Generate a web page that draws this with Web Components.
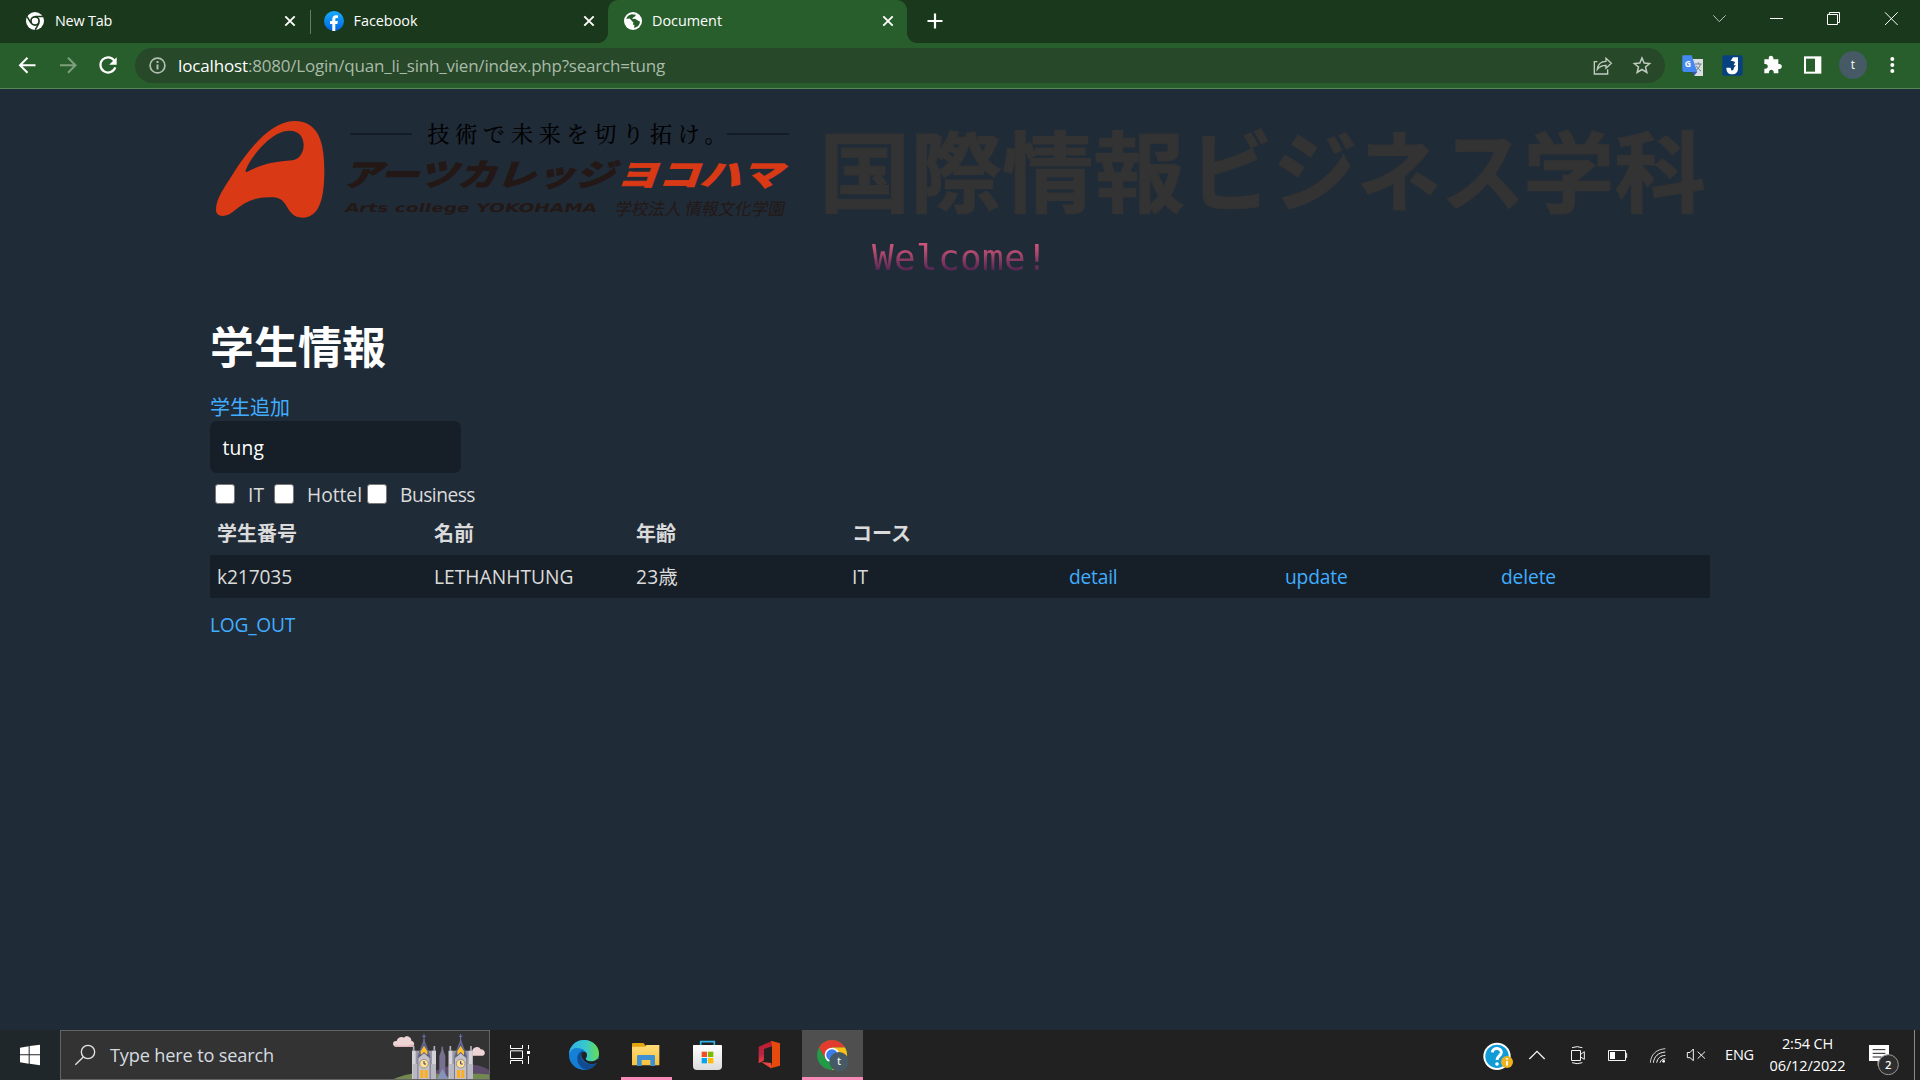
<!DOCTYPE html>
<html lang="ja">
<head>
<meta charset="utf-8">
<title>Document</title>
<style>
html,body{margin:0;height:100%;background:#202b38;overflow:hidden}
</style>
</head>
<body>
<desktop-screen></desktop-screen>
<script>
const UI = '"Open Sans","Noto Sans CJK JP",sans-serif';
const JP = '"Noto Sans CJK JP",sans-serif';

// Segment of a bar: x, y, w, h are drawing units, k is units per CSS pixel.
const seg = (x, y, w, h, k, body) =>
  `<svg width="${w / k}" height="${h / k}" viewBox="${x} ${y} ${w} ${h}" fill="none" style="display:block;flex:none">${body}</svg>`;

function define(name, css, html) {
  const t = document.createElement('template');
  t.innerHTML = `<style>:host{display:block;box-sizing:border-box}${css}</style>${html}`;
  customElements.define(name, class extends HTMLElement {
    constructor() {
      super();
      this.attachShadow({ mode: 'open' }).appendChild(t.content.cloneNode(true));
    }
  });
}

// Text that is tracked to occupy an exact width.
customElements.define('fit-text', class extends HTMLElement {
  constructor() {
    super();
    this.attachShadow({ mode: 'open' }).innerHTML =
      '<style>:host{display:inline-block;white-space:pre;flex:none}span{display:inline-block}</style><span><slot></slot></span>';
  }
  connectedCallback() {
    const target = +this.getAttribute('w');
    const n = this.textContent.length;
    const now = this.shadowRoot.querySelector('span').getBoundingClientRect().width;
    if (target && now) this.style.letterSpacing = ((target - now) / n).toFixed(3) + 'px';
    if (target) this.style.width = target + 'px';
  }
});

/* ---------- browser chrome ---------- */
const close = '<svg width="12" height="12" viewBox="0 0 12 12" style="display:block"><path d="M1.3 1.3L10.7 10.7M10.7 1.3L1.3 10.7" stroke="#fff" stroke-width="1.9"/></svg>';

define('browser-tab', `
:host{display:flex;align-items:center;height:43px;width:298px;padding:0 14px 1px 25px;color:#fff;font:14.4px ${UI};flex:none}
:host([active]){background:#285e2b;border-radius:10px 10px 0 0;position:relative;width:299px;padding-left:15px;padding-right:13px}
:host([active])::before,:host([active])::after{content:"";position:absolute;bottom:0;width:10px;height:10px}
:host([active])::before{left:-10px;background:radial-gradient(circle at 0 0,transparent 9.6px,#285e2b 10.2px)}
:host([active])::after{right:-10px;background:radial-gradient(circle at 100% 0,transparent 9.6px,#285e2b 10.2px)}
.t{margin:-2px 0 0 9px;flex:1;display:flex}`,
`<slot name="icon"></slot><div class="t"><slot></slot></div>${close}`);

define('tab-strip', `
:host{display:flex;height:43px;background:#1a381b;color:#fff}
.div{width:1px;height:24px;background:#60805f;margin-top:10px;flex:none}
.sp{flex:1}
svg{display:block}
.a{padding-left:25px}.b{width:297px;padding-left:13px;padding-right:13px}`,
`<browser-tab class="a" style="width:310px"><svg slot="icon" width="20" height="20" viewBox="0 0 20 20"><circle cx="10" cy="10" r="9" fill="#fff"/><circle cx="10" cy="10" r="4.9" fill="#1a381b"/><circle cx="10" cy="10" r="3.2" fill="#fff"/><path d="M10 5.5H18M6 12.2L2.1 5.6M14 12.2L10.2 18.8" stroke="#1a381b" stroke-width="1.5"/></svg><fit-text w="57" style="margin-left:1px">New Tab</fit-text></browser-tab>
<span class="div"></span>
<browser-tab class="b"><svg slot="icon" width="20" height="20" viewBox="0 0 20 20"><defs><linearGradient id="f" x2="0" y2="1"><stop stop-color="#18acfe"/><stop offset="1" stop-color="#0163e0"/></linearGradient></defs><circle cx="10" cy="10" r="10" fill="url(#f)"/><path d="M8.3 20V13H6V10H8.3V8.2C8.3 5.5 9.8 4.3 12 4.3L14 4.5V7H12.6C11.6 7 11.3 7.5 11.3 8.3V10H13.9L13.4 13H11.3V20Z" fill="#fff"/></svg><fit-text w="64" style="margin-left:.5px">Facebook</fit-text></browser-tab>
<browser-tab active><svg slot="icon" width="20" height="20" viewBox="0 0 20 20"><circle cx="10" cy="10" r="9" fill="#fff"/><path d="M9 3.2C5.6 3.8 3.2 6.2 3 9.2L6 10.5 10.3 11 10 13.5 11.5 14 11 16.8C14.7 16.2 16.9 13.5 16.9 10.4L14.3 9.2 12.2 7.8 9.2 7.9 10.3 6.2 12.3 5.3 12.7 3.7Z" fill="#285e2b"/><path d="M2 8L6.8 7.6 9.6 10.8 8.2 13.2 9.5 17.8 5 16.5 2 12Z" fill="#fff"/></svg><fit-text w="70">Document</fit-text></browser-tab>
${seg(907, 0, 50, 43, 1, '<path d="M935 13.5V28.5M927.5 21H942.5" stroke="#fff" stroke-width="2.2"/>')}
<span class="sp"></span>
${seg(420, 0, 660, 129, 3, '<g stroke="#fff" stroke-width="3"><path d="M460 46L478 65 497 46" stroke-width="2.4" stroke="#dfe6df"/><path d="M630 55.5H669"/><path d="M802.5 43.500H832.5V73.500H802.500ZM808 43V37.5H838.5V67.5H833"/><path d="M975 37L1013 75M1013 37L975 75"/></g>')}`);

define('tool-bar', `
:host{display:flex;align-items:center;height:46px;background:#285e2b;border-bottom:1px solid #568758}
.omni{display:flex;align-items:center;width:1530px;height:35px;border-radius:18px;background:#28482a;font:17px ${UI};color:#a9bba9;overflow:hidden;flex:none}
.omni b{font-weight:400;color:#fff;display:block;padding-left:1px}
.sp{flex:1}`,
`${seg(0, 43, 135, 45, 1, '<g stroke-width="2" transform="translate(0 .3)"><path d="M35.500 65H20.500M27.500 57.500L20 65 27.500 72.500" stroke="#fff"/><path d="M60 65H75M68 57.500L75.500 65 68 72.500" stroke="#7d9f7e"/><path d="M114.500 60.500A7.600 7.600 0 1 0 115.300 67" stroke="#fff" stroke-width="2.200"/><path d="M116.700 57V64.500H109.200Z" fill="#fff"/></g>')}
<div class="omni">${seg(135, 48, 42, 35, 1, '<circle cx="157.500" cy="65.500" r="7.400" stroke="#b3bfb3" stroke-width="1.700"/><path d="M157.500 64.500V69.500M157.500 61V63" stroke="#b3bfb3" stroke-width="2"/>')}<b><fit-text w="70">localhost</fit-text></b><fit-text w="417">:8080/Login/quan_li_sinh_vien/index.php?search=tung</fit-text><span class="sp"></span>
${seg(85, 144, 230, 105, 3, '<g stroke="#c2cdc2" stroke-width="4"><path d="M113 185H104V222H144V208M113 208C115 192 124 184 139 184V175L155 190 139 205V196C128 196 119 200 113 208Z"/><path d="M247 174L253.500 189 270 190.500 257.500 201 261.500 217.500 247 208.500 232.500 217.500 236.500 201 224 190.500 240.500 189Z" stroke-width="4.500"/></g>')}</div>
${seg(315, 129, 765, 135, 3, `
<path d="M397 177H429V228H404Z" fill="#dcdfe1"/><path d="M368 166H395L412 216H373Q367 216 367 210V170Q367 166 368 166Z" fill="#4688f1"/><path d="M397 216H412L404 225Z" fill="#3a53c5"/><path d="M405 192H425M415 187V192M421 193C418 203 412 209 406 213M409 198C413 205 418 210 423 213" stroke="#667b88" stroke-width="3"/><text x="374" y="200" font-family="Open Sans" font-weight="700" font-size="26" fill="#fff">G</text>
<rect x="487" y="166" width="61" height="61" rx="6" fill="#07417f"/><path d="M519 172H534V205C534 218 527 223 517 223 505 223 499 216 499 203H512C512 208 514 211 517 211 520 211 521 209 521 204V183H512Z" fill="#fff"/><path d="M522 185L510 199H518L514 212 528 196H520L526 186Z" fill="#07417f"/>
<path d="M613 178H627C622 164 643 164 640 178H655V192C668 189 670 208 655 207V220H641C644 206 624 206 627 220H613V206C627 209 627 189 613 192Z" fill="#fff"/>
<path d="M732 169H784V221H732Z" fill="#fff"/><path d="M738 176H765V215H738Z" fill="#285e2b"/>
<circle cx="879" cy="195" r="42" fill="#455a64"/><text x="879" y="207" text-anchor="middle" font-family="Open Sans" font-size="36" fill="#fff">t</text>
<g fill="#fff"><circle cx="997" cy="177" r="6"/><circle cx="997" cy="195" r="6"/><circle cx="997" cy="213" r="6"/></g>`)}`);

/* ---------- web page ---------- */
define('school-banner', `svg{display:block}`,
`<svg width="1500" height="140" viewBox="210 89 1500 140">
<path transform="translate(205 115) scale(.33333)" fill="#d93a15" fill-rule="evenodd" d="M33 285C33 250 58 219 87 172C128 108 196 18 268 18C343 18 358 87 358 165C358 247 345 308 292 308C242 308 253 250 207 247C154 243 120 260 87 288C65 308 33 308 33 285ZM122 166C136 128 198 47 253 47C285 47 296 69 296 90C296 115 281 134 262 136C211 139 164 149 126 171Q121 172 122 166Z"/>
<path d="M350 134H412M727 134H789" stroke="#111822" stroke-width="1.500"/>
<text x="427.500" y="142" font-family='"Noto Serif CJK JP","Noto Sans CJK JP",serif' font-size="22" letter-spacing="5.800" fill="#000" stroke="#000" stroke-width=".2">技術で未来を切り拓け。</text>
<g font-family='${JP}' font-weight="900" font-size="31" stroke-width=".6">
<text transform="translate(342 186) skewX(-20)" textLength="272" lengthAdjust="spacingAndGlyphs" fill="#231815" stroke="#231815">アーツカレッジ</text>
<text transform="translate(616 186) skewX(-20)" textLength="166" lengthAdjust="spacingAndGlyphs" fill="#d93a15" stroke="#d93a15">ヨコハマ</text></g>
<text transform="translate(344 212) skewX(-14)" textLength="252" lengthAdjust="spacingAndGlyphs" font-family='"DejaVu Sans",sans-serif' font-weight="700" font-size="12" fill="#231815">Arts college YOKOHAMA</text>
<text transform="translate(614 214.500) skewX(-12)" textLength="170" lengthAdjust="spacingAndGlyphs" font-family='${JP}' font-size="17" fill="#231815">学校法人 情報文化学園</text>
<g font-family='${JP}' font-weight="700" font-size="88" fill="#333" stroke="#333" stroke-width="1">
<text x="819" y="204.500" textLength="366" lengthAdjust="spacingAndGlyphs">国際情報</text>
<text x="1189" y="204" textLength="336" lengthAdjust="spacingAndGlyphs">ビジネス</text>
<text x="1523" y="204.500" textLength="183" lengthAdjust="spacingAndGlyphs">学科</text></g>
</svg>`);

define('welcome-line', `
:host{display:flex;justify-content:center;margin-top:7px;height:47px}
fit-text{font:36px/44px "DejaVu Sans Mono",monospace;color:transparent;background:linear-gradient(#d0567a 7px,#b34a6f 16px,#4a2350 36px,#3c2048);-webkit-background-clip:text;background-clip:text}`,
`<fit-text w="176">Welcome!</fit-text>`);

define('check-option', `
:host{display:flex;align-items:center;height:30px}
i{width:20px;height:20px;border:1px solid #767676;border-radius:3px;background:#fff;box-sizing:border-box;margin:-2px 13px 0 0}`,
`<i></i><slot></slot>`);

define('student-row', `
:host{display:grid;grid-template-columns:217px 202px 216px 217px 216px 216px 1fr;justify-items:start;height:43px;align-items:center;padding-left:7px;box-sizing:border-box}
:host([filled]){background:#161f27}
:host([head]){font:bold 20px/30px ${JP};padding-bottom:2px}`,
`<slot></slot>`);

define('student-page', `
:host{padding:0 210px;height:941px;background:#202b38;color:#dbdbdb;font:19.200px/30px ${UI}}
h1{margin:40px 0 25px 0;font:bold 44px/44px ${JP};color:#fff}
a{color:#41adff;text-decoration:none;display:block}
.add{font:20px/30px ${JP};color:#41adff;height:29px}
.in{width:251px;height:52px;border-radius:7px;background:#161f27;color:#fff;padding:2px 0 0 12.500px;box-sizing:border-box;display:flex;align-items:center}
.checks{display:flex;margin:7px 0 2px 5px}
.out{margin-top:12px}`,
`<school-banner></school-banner><welcome-line></welcome-line>
<h1>学生情報</h1><a class="add">学生追加</a>
<div class="in"><fit-text w="41.500">tung</fit-text></div>
<div class="checks"><check-option style="width:59px"><fit-text w="16">IT</fit-text></check-option><check-option style="width:93px"><fit-text w="55">Hottel</fit-text></check-option><check-option><fit-text w="75">Business</fit-text></check-option></div>
<student-row head><span>学生番号</span><span>名前</span><span>年齢</span><span>コース</span></student-row>
<student-row filled><fit-text w="75">k217035</fit-text><fit-text w="139.500">LETHANHTUNG</fit-text><fit-text w="42">23歳</fit-text><fit-text w="16">IT</fit-text><a><fit-text w="48.500">detail</fit-text></a><a><fit-text w="62.500">update</fit-text></a><a><fit-text w="55">delete</fit-text></a></student-row>
<a class="out"><fit-text w="85">LOG_OUT</fit-text></a>`);

/* ---------- task bar ---------- */
const tower = x => `<g transform="translate(${x} 0)"><path d="M-36 92H36V180H-36Z" fill="#9a99a3"/><path d="M-36 92H-25V180H-36ZM24 92H36V180H24Z" fill="#d5d3d8"/><path d="M-34 132H-20V180H-34ZM21 132H36V180H21Z" fill="#b9b8c1"/><path d="M-31 92V78M31 92V78" stroke="#aeb0c2" stroke-width="5"/><path d="M-19 108L0 56 19 108V180H-19Z" fill="#686b8d"/><path d="M-14 108L0 68 14 108Z" fill="#4c5588"/><path d="M0 42V65M-5 49H5" stroke="#6577ad" stroke-width="3"/><path d="M-10 106V94L0 77 10 94V106L0 96Z" fill="#ffc12c"/><path d="M-17 115L0 100 17 115V180H-17Z" fill="#c4c2c8"/><circle cy="131" r="13" fill="#ffdf91" stroke="#77748a" stroke-width="2"/><path d="M0 123V132H6" stroke="#344262" stroke-width="3"/><path d="M-11 174V150H-2V174ZM2 174V150H11V174Z" fill="#ffae17"/></g>`;

define('search-box', `
:host{display:flex;width:430px;height:50px;background:#333;border:1px solid #636363;color:#d6dbe0;font:18.200px/50px ${UI};flex:none}
span{flex:1;padding-top:0;margin-top:-1px}`,
`${seg(183, 33, 147, 144, 3, '<circle cx="264" cy="96" r="20" stroke="#e6e6e6" stroke-width="4"/><path d="M250 111L226 134" stroke="#e6e6e6" stroke-width="4"/>')}<span><fit-text w="164">Type here to search</fit-text></span>
${seg(1176, 33, 291, 144, 3, `<path d="M1290 160C1370 120 1440 130 1470 152V180H1290Z" fill="#5d4b6c"/><path d="M1179 178C1230 155 1300 150 1340 170 1400 158 1440 160 1470 164V180H1179Z" fill="#738950"/><path d="M1188 81C1176 79 1176 61 1190 63 1192 52 1205 49 1212 53 1222 43 1236 54 1234 63 1245 64 1246 80 1234 81Z" fill="#efd4d6"/><path d="M1185 74Q1210 82 1240 72 1242 81 1234 81H1188Q1182 80 1185 74Z" fill="#dfb5b9"/><path d="M1412 107C1402 103 1408 90 1417 92 1420 80 1437 77 1442 88 1455 88 1459 103 1449 107Z" fill="#efd4d6"/><path d="M1318 180V108L1327 82 1336 108V180Z" fill="#77718f"/><path d="M1327 80V90" stroke="#77718f" stroke-width="5"/>${tower(1272)}${tower(1382)}<path d="M1308 180L1328 146 1346 180Z" fill="#8792b7"/>`)}`);

define('task-bar', `
:host{display:flex;height:50px;background:#212121;color:#fff;font:14.500px/22px ${UI}}
.sp{flex:1}
.clock{width:87px;display:flex;flex-direction:column;align-items:center;padding:3px 0 0 4px;box-sizing:border-box}
.eng{width:41px;padding:14px 0 0 4px;box-sizing:border-box}
.start{background:#20272a}`,
`<div class="start">${seg(0, 30, 180, 150, 3, '<path d="M60 83L86 79V103H60ZM89 78L120 74V103H89ZM60 106H86V131L60 127ZM89 106H120V136L89 131Z" fill="#fff"/>')}</div>
<search-box></search-box>
${seg(30, 30, 1170, 150, 3, `<defs>
<linearGradient id="e1"><stop stop-color="#32afe5"/><stop offset=".55" stop-color="#38c8cf"/><stop offset="1" stop-color="#67dc4e"/></linearGradient>
<linearGradient id="e2" x2=".6" y2="1"><stop stop-color="#1686d6"/><stop offset="1" stop-color="#1379d4"/></linearGradient>
<linearGradient id="fo" x2="0" y2="1"><stop stop-color="#ffdc79"/><stop offset="1" stop-color="#f6c13c"/></linearGradient>
<linearGradient id="st" x2="0" y2="1"><stop stop-color="#fff"/><stop offset="1" stop-color="#dcdcdc"/></linearGradient>
<linearGradient id="of" x2="0" y2="1"><stop stop-color="#bd1d2d"/><stop offset=".6" stop-color="#b62545"/><stop offset="1" stop-color="#ef423c"/></linearGradient></defs>
<g stroke="#fff" stroke-width="3"><path d="M91.500 75V85.500H127.500V75M91.500 132V121.500H127.500V132M91.500 92.500H127.500V115.500H91.500ZM145.500 75V88M145.500 108V132"/><path d="M141 93H150V102H141Z" fill="#fff" stroke="none"/></g>
<circle cx="312" cy="105" r="45" fill="url(#e2)"/><path d="M267 103C268 78 288 60 312 60 340 60 357 80 357 101 357 116 344 125 330 124 321 123 314 119 320 112 326 98 309 83 288 84 277 85 271 93 267 103Z" fill="url(#e1)"/><path d="M312 91C299 93 292 104 292 116 292 134 307 149 322 149 335 147 346 137 351 128 330 140 306 127 304 111 303 103 307 96 312 91Z" fill="#114b92"/><path d="M304 104C304 98 308 95 313 95 321 96 323 106 319 112 314 119 321 124 331 124 340 125 348 121 353 117L358 122 351 128C333 139 304 126 304 104Z" fill="#212121"/>
<path d="M456 72Q456 69 459 69H490L496 76V88H456Z" fill="#e5a50d"/><path d="M456 80H494L500 75H538V136H456Z" fill="url(#fo)"/><path d="M471 138V109Q471 105 475 105H521Q525 105 525 109V138H511V120H485V138Z" fill="#3d91d2"/>
<path d="M423 171H576V180H423Z" fill="#fa88b8"/>
<path d="M662 80V65H703V80" stroke="#2fb4ee" stroke-width="5"/><path d="M639 76Q639 75 642 75H723Q726 75 726 78V138Q726 150 714 150H651Q639 150 639 138Z" fill="url(#st)"/><path d="M665 95H681V111H665Z" fill="#f25022"/><path d="M684 95H700V111H684Z" fill="#7fba00"/><path d="M665 114H681V130H665Z" fill="#00a4ef"/><path d="M684 114H700V130H684Z" fill="#ffb900"/>
<path d="M836 80L876 63V79L852 87V121L844 126 836 129Z" fill="url(#of)"/><path d="M844 126L873 129V145Z" fill="#ee463f"/><path d="M873 62L900 70V137L871 145 876 128V75Z" fill="#e64a0c"/>
<path d="M966 30H1149V180H966Z" fill="#4f4f4f"/><path d="M966 171H1149V180H966Z" fill="#fa88b8"/>
<g transform="translate(1056 105)"><circle r="45" fill="#229a47"/><path d="M-39 -22.500A45 45 0 0 1 39 -22.500L0 -22.500-20 11Z" fill="#e33b2e"/><path d="M39-22.500A45 45 0 0 1 0 45L20 11 0-22.500Z" fill="#fbc116"/><circle r="22" fill="#fff"/><circle r="17.500" fill="#3b7ded"/><circle cx="21" cy="20" r="29" fill="#455a64"/><text x="21" y="31" text-anchor="middle" font-family="Open Sans" font-weight="600" font-size="31" fill="#e6eaec">t</text></g>`)}
<span class="sp"></span>
${seg(60, 30, 723, 150, 3, `<circle cx="111" cy="109" r="41" fill="#fff"/><circle cx="111" cy="109" r="35" fill="#119bd7"/><path d="M97 97C98 81 125 82 124 98 123 108 111 108 111 120" stroke="#fff" stroke-width="9"/><circle cx="111" cy="132" r="5.500" fill="#fff"/><circle cx="141" cy="126" r="18" fill="#efb21f"/><path d="M141 123V137M141 114V119" stroke="#fff" stroke-width="5"/>
<g stroke="#f4f4f4" stroke-width="3"><path d="M208 117L231 94 254 117" stroke-width="4"/><path d="M334.500 91.500H361.500V121.500H334.500ZM362 103L373 95V118L362 111M336 83Q351 77 367 83M336 128Q351 134 367 128"/><path d="M445.500 91.500H496.500V121.500H445.500ZM497 100H500V113H497"/><path d="M450 96H465V117H450Z" fill="#fff" stroke="none"/><path d="M571 128C573 103 589 88 616 86" opacity=".8"/><path d="M580 128C583 109 594 98 616 96"/><path d="M590 128C593 114 601 107 616 106"/><path d="M600 128C603 120 607 117 616 116"/><circle cx="611" cy="124" r="4" fill="#fff" stroke="none"/><path d="M682 97.500H690L700 87V122L690 113H682ZM713 95L735 116M735 95L713 116"/></g>`)}
<div class="eng"><fit-text w="29">ENG</fit-text></div>
<div class="clock"><fit-text w="51">2:54 CH</fit-text><fit-text w="76">06/12/2022</fit-text></div>
${seg(1167, 30, 213, 150, 3, `<path d="M1227 75H1287V123H1266L1253 137V123H1227Z" fill="#fff"/><path d="M1238 89H1276M1238 100H1276M1238 111H1265" stroke="#222" stroke-width="3"/><circle cx="1285" cy="134" r="30" fill="#2e2e2e" stroke="#999" stroke-width="3"/><text x="1285" y="146" text-anchor="middle" font-family="Open Sans" font-weight="600" font-size="34" fill="#fff">2</text><path d="M1363.500 30V180" stroke="#8a8a8a" stroke-width="3"/>`)}`);

define('desktop-screen', `:host{display:flex;flex-direction:column;width:1920px;height:1080px}`,
`<tab-strip></tab-strip><tool-bar></tool-bar><student-page></student-page><task-bar></task-bar>`);
</script>
</body>
</html>
